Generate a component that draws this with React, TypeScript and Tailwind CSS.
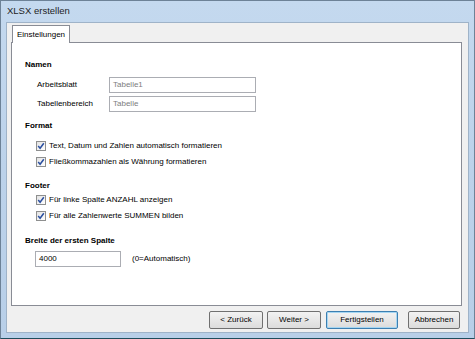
import { FC } from 'react';

const Check: FC<{ label: string }> = ({ label }) => (
  <div className="flex h-[16px] items-center gap-[3px]">
    <span className="flex h-[10px] w-[10px] items-center justify-center border border-[#8e8f8f] bg-gradient-to-br from-[#e3e3e3] to-[#ffffff]">
      <svg width="8" height="8" viewBox="0 0 8 8">
        <path d="M1.2 4 L3.1 6.2 L6.8 1.2" fill="none" stroke="#2a4fa0" strokeWidth="1.5" />
      </svg>
    </span>
    <span>{label}</span>
  </div>
);

const Btn: FC<{ label: string; w: string; focused?: boolean }> = ({ label, w, focused }) => (
  <div
    className={`flex h-[18px] items-center justify-center rounded-[2px] border bg-gradient-to-b from-[#f2f2f2] to-[#dcdcdc] ${w} ${
      focused ? 'border-[#3c7fb1] shadow-[inset_0_0_0_1px_#a6d6f2]' : 'border-[#707070]'
    }`}
  >
    {label}
  </div>
);

export default function App() {
  return (
    <div className="flex h-[339px] w-[475px] flex-col border border-[#6d8297] border-b-[#1e4d5c] bg-gradient-to-b from-[#c4d9ef] via-[#bcd2ea] to-[#b8cfe8] font-['Liberation_Sans',sans-serif] text-[8px] text-black">
      <div className="flex h-[21px] items-center px-[6px] text-[9.5px] text-[#1e1e1e]">XLSX erstellen</div>

      <div className="mx-[5px] mb-[5px] flex flex-1 flex-col border border-[#9fb3c8] bg-[#f0f0f0]">
        <div className="flex px-[5px] pt-[2px]">
          <div className="relative z-10 -mb-px flex h-[18px] items-center border border-b-0 border-[#898c95] bg-white px-[4px]">
            Einstellungen
          </div>
        </div>

        <div className="ml-[4px] mr-[6px] flex h-[264px] flex-col border border-[#898c95] bg-white px-[13px] pt-[16px]">
          <div className="font-bold">Namen</div>
          <div className="mt-[6px] flex flex-col gap-[3px] pl-[12px]">
            <div className="flex items-center">
              <span className="w-[72px]">Arbeitsblatt</span>
              <div className="flex h-[16px] w-[147px] items-center border border-[#abadb3] px-[3px] text-[#7d7d7d]">Tabelle1</div>
            </div>
            <div className="flex items-center">
              <span className="w-[72px]">Tabellenbereich</span>
              <div className="flex h-[16px] w-[147px] items-center border border-[#abadb3] px-[3px] text-[#7d7d7d]">Tabelle</div>
            </div>
          </div>

          <div className="mt-[8px] font-bold">Format</div>
          <div className="mt-[6px] flex flex-col pl-[11px]">
            <Check label="Text, Datum und Zahlen automatisch formatieren" />
            <Check label="Fließkommazahlen als Währung formatieren" />
          </div>

          <div className="mt-[10px] font-bold">Footer</div>
          <div className="flex flex-col pl-[11px]">
            <Check label="Für linke Spalte ANZAHL anzeigen" />
            <Check label="Für alle Zahlenwerte SUMMEN bilden" />
          </div>

          <div className="mt-[11px] font-bold">Breite der ersten Spalte</div>
          <div className="mt-[4px] flex items-center gap-[11px] pl-[10px]">
            <div className="flex h-[16px] w-[86px] items-center border border-[#abadb3] px-[3px]">4000</div>
            <span>(0=Automatisch)</span>
          </div>
        </div>

        <div className="flex justify-end gap-[4px] pr-[8px] pt-[5px]">
          <Btn label="< Zurück" w="w-[54px]" />
          <Btn label="Weiter >" w="w-[54px]" />
          <div className="ml-[1px] mr-[6px]">
            <Btn label="Fertigstellen" w="w-[72px]" focused />
          </div>
          <Btn label="Abbrechen" w="w-[52px]" />
        </div>
      </div>
    </div>
  );
}
